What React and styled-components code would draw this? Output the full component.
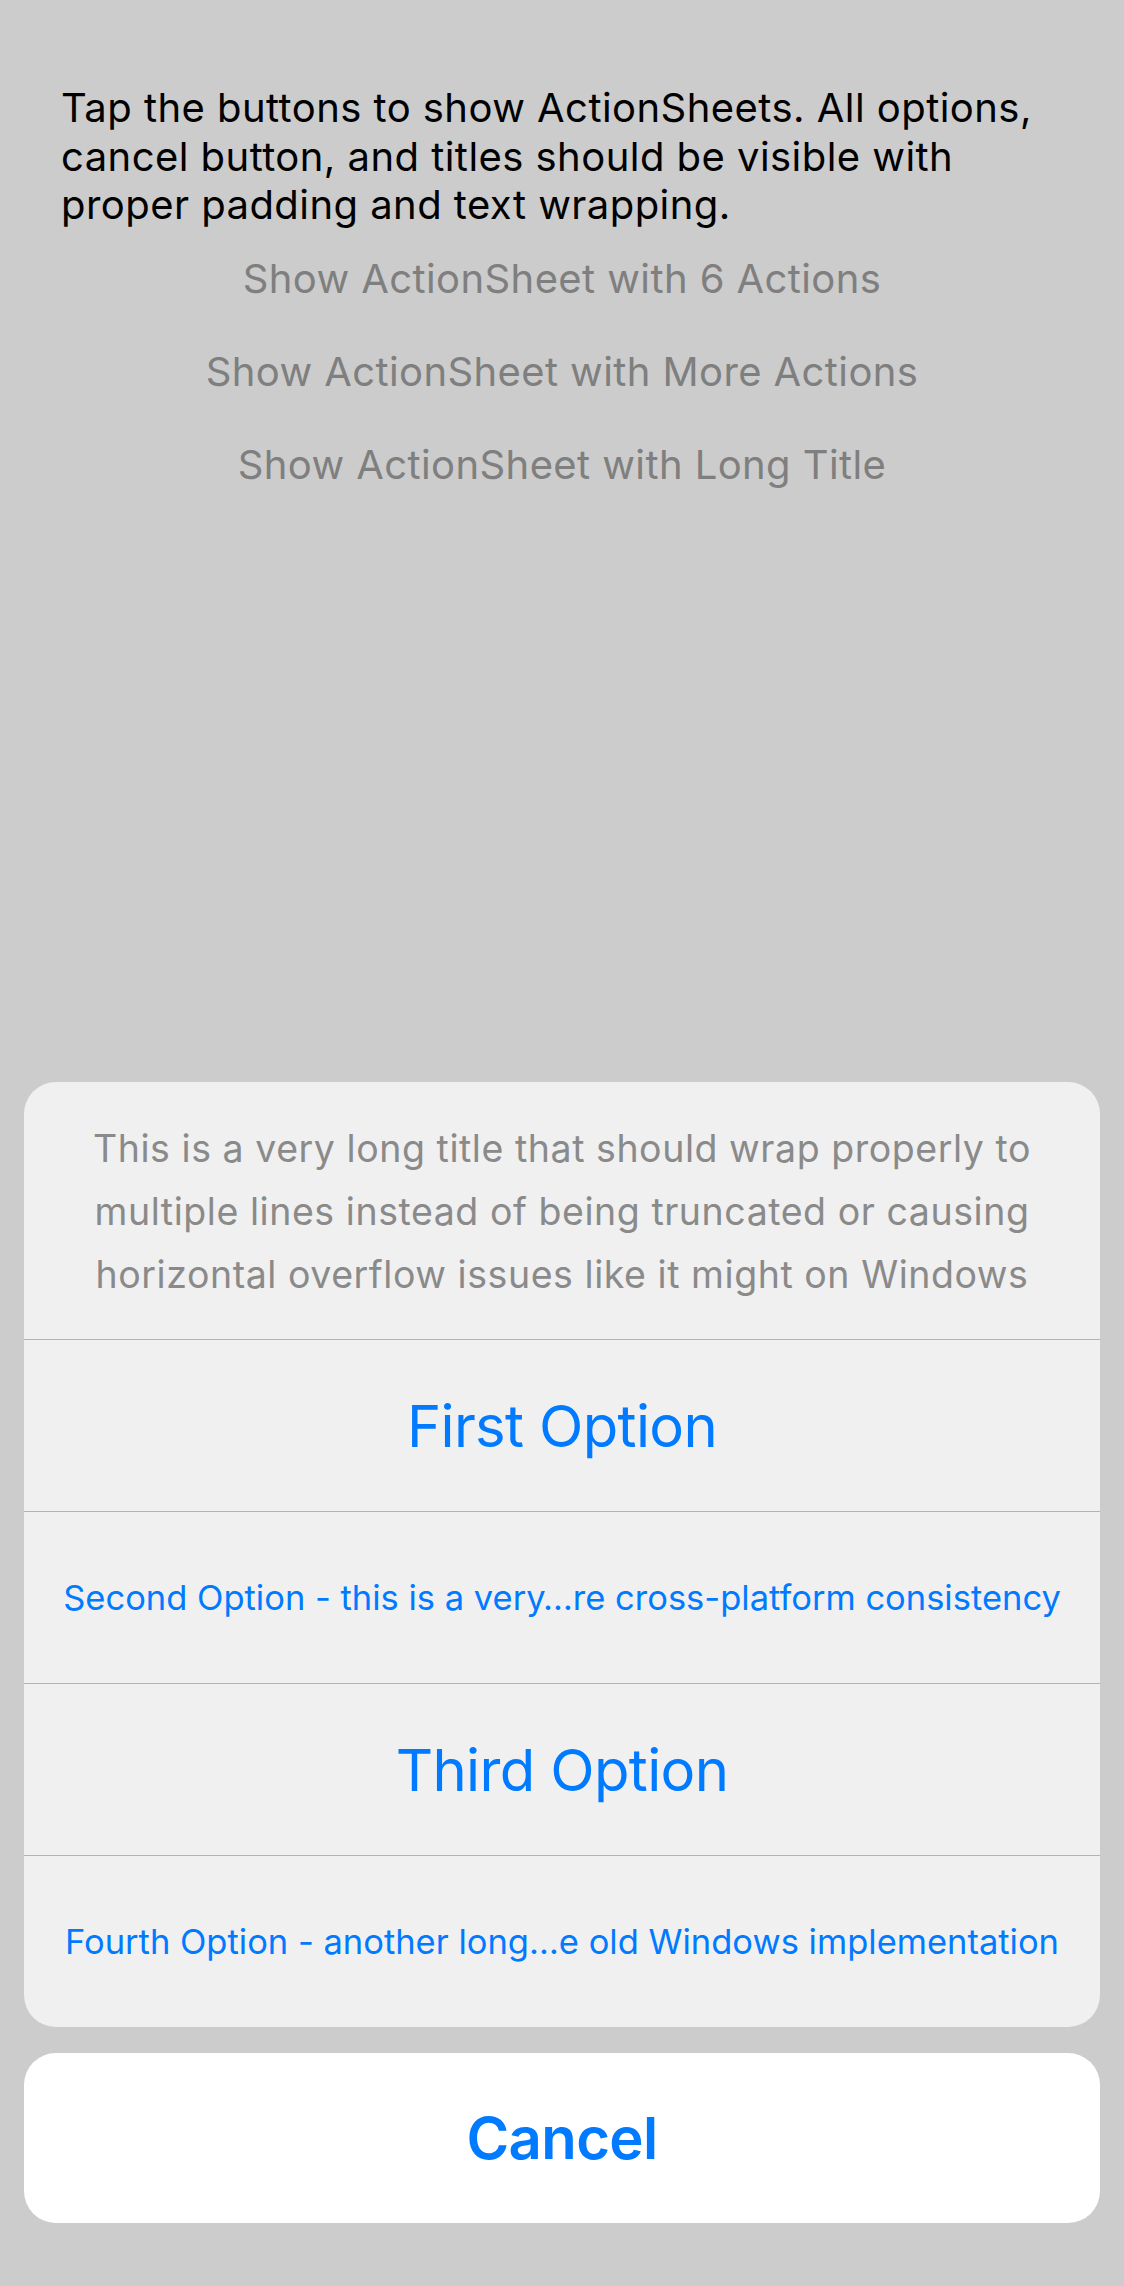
import styled, { createGlobalStyle } from "styled-components"

const GlobalStyle = createGlobalStyle`
  html, body {
    margin: 0;
    padding: 0;
    background: #cccccc;
  }

  body {
    font-family: Inter, "Liberation Sans", sans-serif;
  }
`;

const Page = styled.div`
  min-height: 2286px;
  box-sizing: border-box;
  display: flex;
  flex-direction: column;
  padding: 84px 0 63px;
`;

const Intro = styled.p`
  margin: 0 61px;
  font-size: 40px;
  line-height: 48.5px;
  letter-spacing: 0.45px;
  color: #000;
`;

const DemoList = styled.div`
  display: flex;
  flex-direction: column;
  margin-top: 2px;
`;

const DemoButton = styled.button`
  border: 0;
  background: transparent;
  font-family: inherit;
  font-size: 40px;
  line-height: 49px;
  letter-spacing: 0.4px;
  padding: 22px 0;
  color: #7f7f7f;
  text-align: center;
`;

const Spacer = styled.div`
  flex: 1;
`;

const Sheet = styled.div`
  margin: 0 24px;
  background: #f0f0f0;
  border-radius: 32px;
  overflow: hidden;
  display: flex;
  flex-direction: column;
`;

const SheetTitle = styled.div`
  padding: 35px 56px 33px;
  font-size: 37.5px;
  line-height: 63px;
  letter-spacing: 0.55px;
  color: #8a8a8a;
  text-align: center;
`;

const Action = styled.button`
  height: 172px;
  border: 0;
  border-top: 1.5px solid #b4b4b4;
  background: transparent;
  font-family: inherit;
  font-size: ${(props) => (props.$small ? "34.5px" : "58px")};
  letter-spacing: ${(props) => (props.$small ? "0" : "-0.65px")};
  color: #007aff;
  white-space: nowrap;
  text-align: center;
  padding: 0 20px;
`;

const CancelButton = styled.button`
  margin: 26px 24px 0;
  height: 170px;
  border: 0;
  border-radius: 32px;
  background: #ffffff;
  font-family: inherit;
  font-size: 58px;
  font-weight: 600;
  letter-spacing: -0.6px;
  color: #007aff;
`;

const demos = [
  "Show ActionSheet with 6 Actions",
  "Show ActionSheet with More Actions",
  "Show ActionSheet with Long Title",
];

const actions = [
  { label: "First Option" },
  { label: "Second Option - this is a very\u2026re cross-platform consistency", small: true },
  { label: "Third Option" },
  { label: "Fourth Option - another long\u2026e old Windows implementation", small: true },
];

const App = () => {
  return (
    <>
      <GlobalStyle />
      <Page>
        <Intro>
          Tap the buttons to show ActionSheets. All options, cancel button, and titles should be
          visible with proper padding and text wrapping.
        </Intro>
        <DemoList>
          {demos.map((label) => (
            <DemoButton key={label}>{label}</DemoButton>
          ))}
        </DemoList>
        <Spacer />
        <Sheet>
          <SheetTitle>
            This is a very long title that should wrap properly to multiple lines instead of being
            truncated or causing horizontal overflow issues like it might on Windows
          </SheetTitle>
          {actions.map((action) => (
            <Action key={action.label} $small={action.small}>
              {action.label}
            </Action>
          ))}
        </Sheet>
        <CancelButton>Cancel</CancelButton>
      </Page>
    </>
  );
};

export default App
